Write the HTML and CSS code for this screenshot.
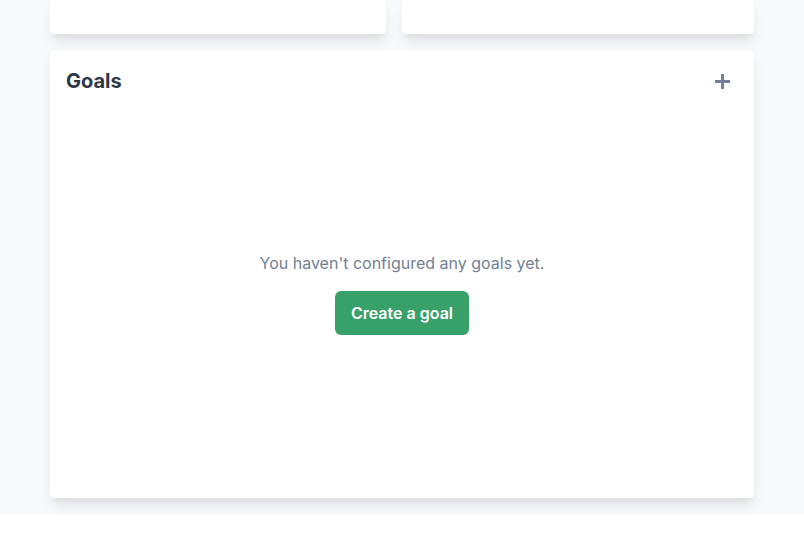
FILE: index.html
```html
<!DOCTYPE html>
<html>
<head>
<meta charset="utf-8">
<link rel="stylesheet" href="styles.css">
</head>
<body>
<div class="page">
  <div class="top-row">
    <div class="card stub"></div>
    <div class="card stub"></div>
  </div>
  <div class="card goals">
    <div class="goals-head">
      <h2 class="goals-title">Goals</h2>
      <button class="add-btn" aria-label="Add goal">
        <svg width="15" height="15" viewBox="0 0 15 15"><path d="M7.5 0v15M0 7.5h15" stroke="#718096" stroke-width="3" fill="none"/></svg>
      </button>
    </div>
    <div class="goals-body">
      <p class="empty-text">You haven't configured any goals yet.</p>
      <button class="create-btn">Create a goal</button>
    </div>
  </div>
</div>
</body>
</html>
```
FILE: styles.css
```css
html, body { margin: 0; padding: 0; background: #fff; }
body { font-family: Inter, "Noto Sans", sans-serif; }
.page {
  background: #f7fafc;
  padding: 0 50px 16px;
  display: flex;
  flex-direction: column;
  gap: 16px;
}
.top-row {
  display: grid;
  grid-template-columns: 336px 1fr;
  gap: 16px;
}
.card {
  background: #fff;
  border-radius: 4px;
  box-shadow: 0 10px 15px -3px rgba(0,0,0,.1), 0 4px 6px -2px rgba(0,0,0,.05);
}
.stub { height: 34px; border-radius: 0 0 4px 4px; }
.goals {
  height: 448px;
  box-sizing: border-box;
  padding: 16px;
  display: flex;
  flex-direction: column;
}
.goals-head {
  display: flex;
  justify-content: space-between;
  align-items: center;
  height: 30px;
}
.goals-title {
  margin: 0;
  font-size: 20px;
  line-height: 30px;
  font-weight: 700;
  color: #2d3748;
}
.add-btn {
  border: 0;
  background: none;
  padding: 0;
  width: 15px;
  height: 15px;
  margin-right: 8px;
  margin-top: 1px;
  display: flex;
}
.goals-body {
  flex: 1;
  display: flex;
  flex-direction: column;
  align-items: center;
  justify-content: center;
  padding-top: 8px;
}
.empty-text {
  margin: 0 0 16px;
  font-size: 16px;
  line-height: 24px;
  color: #718096;
}
.create-btn {
  font-family: inherit;
  font-size: 16px;
  font-weight: 600;
  color: #fff;
  background: #38a169;
  border: 0;
  border-radius: 6px;
  height: 44px;
  padding: 0 16px;
}
```
